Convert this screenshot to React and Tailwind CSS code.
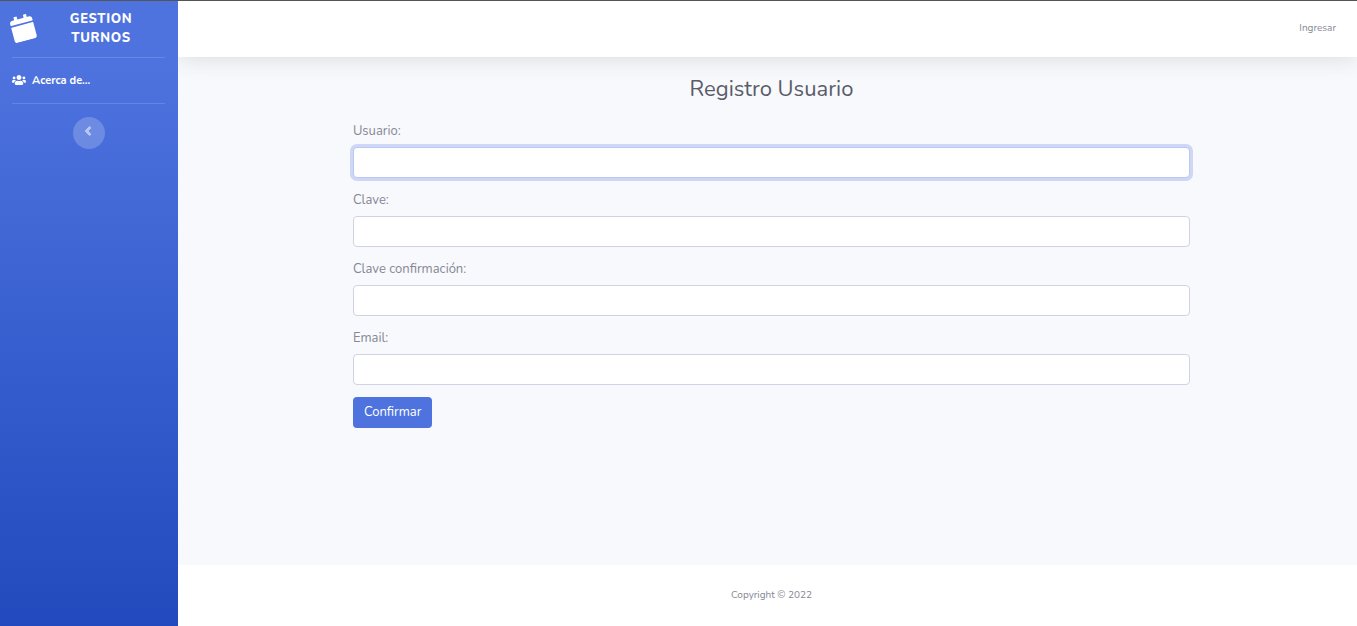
import { FaAngleLeft, FaCalendar, FaUsers } from "react-icons/fa";

const fields = [
  { id: "usuario", label: "Usuario:", type: "text" },
  { id: "clave", label: "Clave:", type: "password" },
  { id: "confirmacion", label: "Clave confirmación:", type: "password" },
  { id: "email", label: "Email:", type: "email" },
];

function Sidebar() {
  return (
    <aside className="relative z-10 flex w-[178px] shrink-0 flex-col bg-linear-to-b from-[#4e73df] from-10% to-[#224abe] text-white">
      <a href="#inicio" className="flex h-14 items-center pl-[10px] pr-3">
        <FaCalendar className="mb-[2px] size-[26px] shrink-0 -rotate-15" aria-hidden="true" />
        <span className="mx-3 flex-1 text-center text-[13px] leading-[19px] font-extrabold tracking-wider uppercase">
          Gestion Turnos
        </span>
      </a>
      <hr className="ml-3 mr-[13px] border-white/15" />
      <nav>
        <a href="#acerca" className="flex h-[45px] items-center gap-[6px] px-3 text-[11px] font-bold">
          <FaUsers className="mb-[2px] size-[14px]" aria-hidden="true" />
          <span className="pt-px">Acerca de...</span>
        </a>
      </nav>
      <hr className="ml-3 mr-[13px] border-white/15" />
      <button
        type="button"
        aria-label="Contraer menú"
        className="mt-[13px] flex size-8 items-center justify-center self-center rounded-full bg-white/20 pr-[2px] pb-1 text-white/50"
      >
        <FaAngleLeft className="size-[14px]" stroke="currentColor" strokeWidth="24" aria-hidden="true" />
      </button>
    </aside>
  );
}

function RegisterForm() {
  return (
    <form className="mx-auto w-[71.5%]">
      <h1 className="mb-[17px] text-center text-[22px] leading-[30px] font-normal text-[#5a5c69]">
        Registro Usuario
      </h1>
      {fields.map((field, index) => (
        <div key={field.id} className="mb-3">
          <label htmlFor={field.id} className="mb-[5px] block w-fit text-[13px] leading-[21px]">
            {field.label}
          </label>
          <input
            id={field.id}
            name={field.id}
            type={field.type}
            autoFocus={index === 0}
            className="block h-[31px] w-full rounded border border-[#d1d3e2] bg-white px-[10px] text-[13px] text-[#6e707e] caret-transparent outline-none focus:border-[#bac8f3] focus:ring-3 focus:ring-[#4e73df]/25"
          />
        </div>
      ))}
      <button type="submit" className="h-[31px] rounded bg-[#4e73df] px-[11px] text-[13px] text-white">
        Confirmar
      </button>
    </form>
  );
}

export default function App() {
  return (
    <div className="flex min-h-screen border-t border-[#555558] bg-[#f8f9fc] font-['Nunito','Lato',sans-serif] text-[#858796]">
      <Sidebar />
      <div className="flex min-w-0 flex-1 flex-col">
        <header className="flex h-14 items-center justify-end bg-white px-[21px] pb-[2px] text-[10px] shadow-[0_2px_22px_0_rgba(58,59,69,0.15)]">
          <a href="#ingresar">Ingresar</a>
        </header>
        <main className="flex-1 pt-[17px] pl-2">
          <RegisterForm />
        </main>
        <footer className="flex h-[61px] items-center justify-center bg-white pl-2 text-[10px]">
          Copyright © 2022
        </footer>
      </div>
    </div>
  );
}
